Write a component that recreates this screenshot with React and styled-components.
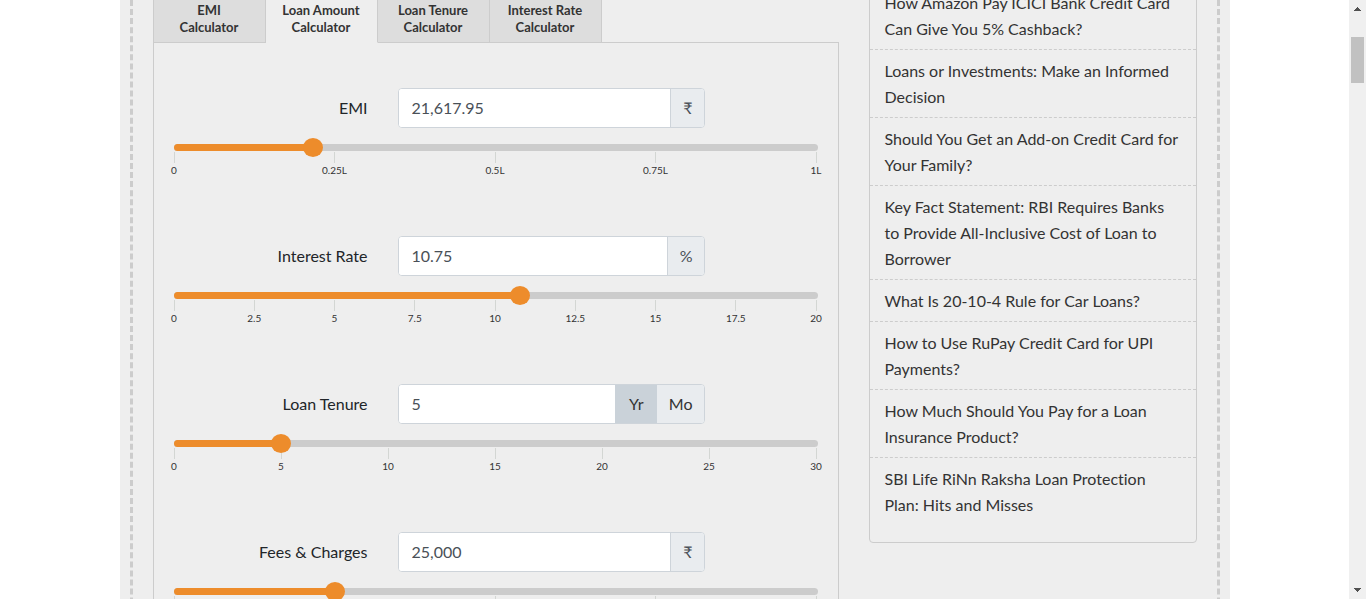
import React, { useState } from "react";
import styled, { createGlobalStyle } from "styled-components";

const GlobalStyle = createGlobalStyle`
  *, *::before, *::after { box-sizing: border-box; }
  body {
    margin: 0;
    background: #fff;
    color: #212529;
    font: 400 16px/26px Lato, "Noto Sans", sans-serif;
    font-variant-ligatures: none;
  }
  button, input { font: inherit; color: inherit; margin: 0; }
`;

const Shell = styled.div`
  display: flex;
  height: 100vh;
  overflow: hidden;
`;

const Viewport = styled.div`
  flex: 1;
  min-width: 0;
`;

const Container = styled.div`
  max-width: 1110px;
  margin: 0 auto;
  padding: 0 10px;
  background: #eee;
`;

const Frame = styled.main`
  display: grid;
  grid-template-columns: minmax(0, 1fr) 328px;
  gap: 30px;
  align-items: start;
  padding: 0 20px;
  border: dashed #ccc;
  border-width: 0 3px;
`;

const TabList = styled.div`
  display: flex;
  border-bottom: 1px solid #ccc;
`;

const Tab = styled.button`
  width: 112px;
  height: 43px;
  margin-bottom: -1px;
  padding: 2px 16px 6px;
  border: solid #ccc;
  border-width: 0 1px 1px 0;
  background: ${(p) => (p.$active ? "#eee" : "#ddd")};
  border-bottom-color: ${(p) => (p.$active ? "#eee" : "#ccc")};
  color: #333;
  font-size: 13px;
  font-weight: 700;
  line-height: 17px;
  cursor: pointer;

  &:first-child {
    width: 113px;
    padding: 2px 20px 6px;
    border-left-width: 1px;
  }
`;

const Panel = styled.form`
  display: flex;
  flex-direction: column;
  gap: 58px;
  padding: 45px 20px;
  border: solid #ccc;
  border-width: 0 1px;
`;

const Field = styled.div`
  display: flex;
  flex-direction: column;
  gap: 16px;
`;

const FieldRow = styled.div`
  display: grid;
  grid-template-columns: 194px minmax(0, 307px);
  gap: 30px;
  align-items: center;
`;

const Label = styled.label`
  text-align: right;
`;

const InputGroup = styled.div`
  display: flex;
  height: 40px;
  border: 1px solid #ced4da;
  border-radius: 4px;
  overflow: hidden;
  background: #fff;
`;

const TextInput = styled.input`
  flex: 1;
  min-width: 0;
  padding: 0 13px;
  border: 0;
  outline: 0;
  background: #fff;
  color: #495057;
`;

const Unit = styled.span`
  display: flex;
  align-items: center;
  padding: 0 11px 0 12px;
  border-left: 1px solid #ced4da;
  background: #e9ecef;
  color: #495057;
`;

const UnitButton = styled.button`
  min-width: 42px;
  padding: 0 11px 0 12px;
  border: 0;
  background: ${(p) => (p.$active ? "#cad2d9" : "#e9ecef")};
  color: #333;
  cursor: pointer;
`;

const Slider = styled.div`
  display: flex;
  flex-direction: column;
  gap: 1px;
`;

const Rail = styled.div`
  display: grid;
  grid-template-rows: 7px;
  align-items: center;
  border-radius: 4px;
  background: #ccc;
`;

const RailFill = styled.div`
  grid-area: 1 / 1;
  height: 7px;
  border-radius: 4px;
  background: #ed8c2b;
`;

const Range = styled.input`
  grid-area: 1 / 1;
  z-index: 1;
  appearance: none;
  width: calc(100% + 20px);
  height: 19px;
  margin: 0 -10px;
  background: transparent;
  cursor: pointer;

  &::-webkit-slider-thumb {
    appearance: none;
    width: 20px;
    height: 19px;
    border-radius: 50%;
    background: #ed8c2b;
  }
`;

const Scale = styled.div`
  display: flex;
  justify-content: space-between;
  padding-right: 1px;
`;

const Tick = styled.span`
  display: flex;
  flex-direction: column;
  align-items: center;
  width: 1px;
  color: #333;
  font-size: 10px;
  line-height: 15px;
  white-space: nowrap;

  &::before {
    content: "";
    width: 1px;
    height: 11px;
    background: #d3d6d3;
  }
`;

const Sidebar = styled.aside`
  margin-top: -19px;
  padding-bottom: 17px;
  border: 1px solid #ccc;
  border-radius: 4px;
`;

const LinkList = styled.ul`
  margin: 0;
  padding: 0;
  list-style: none;
`;

const LinkItem = styled.li`
  padding: 8px 14px 7px 15px;
  border-bottom: 1px dashed #ccc;

  &:last-child { border-bottom: 0; }
`;

const ArticleLink = styled.a`
  color: #333;
  text-decoration: none;
`;

const ScrollBar = styled.div`
  display: flex;
  flex-direction: column;
  flex: 0 0 17px;
  align-items: center;
  height: 100vh;
  background: #f0f0f0;
`;

const Thumb = styled.div`
  width: 13px;
  height: 46px;
  margin: 20px 0 auto;
  background: #c1c1c1;
`;

const Arrow = ({ down }) => (
  <svg width="17" height="17" viewBox="0 0 17 17" fill="#505050" shapeRendering="crispEdges">
    <path d={down ? "M5 6h7v1h-1v1h-1v1h-1v1h-1v-1h-1v-1h-1v-1h-1z" : "M8 7h1v1h1v1h1v1h1v1h-7v-1h1v-1h1v-1h1z"} />
  </svg>
);

const tabs = ["EMI Calculator", "Loan Amount Calculator", "Loan Tenure Calculator", "Interest Rate Calculator"];

const fields = [
  { id: "emi", label: "EMI", text: "21,617.95", unit: "₹", value: 21618, max: 100000, ticks: ["0", "0.25L", "0.5L", "0.75L", "1L"] },
  { id: "rate", label: "Interest Rate", text: "10.75", unit: "%", value: 10.75, max: 20, ticks: ["0", "2.5", "5", "7.5", "10", "12.5", "15", "17.5", "20"] },
  { id: "tenure", label: "Loan Tenure", text: "5", value: 5, max: 30, ticks: ["0", "5", "10", "15", "20", "25", "30"] },
  { id: "fees", label: "Fees & Charges", text: "25,000", unit: "₹", value: 25000, max: 100000, ticks: ["0", "25K", "50K", "75K", "1L"] },
];

const articles = [
  "How Amazon Pay ICICI Bank Credit Card Can Give You 5% Cashback?",
  "Loans or Investments: Make an Informed Decision",
  "Should You Get an Add-on Credit Card for Your Family?",
  "Key Fact Statement: RBI Requires Banks to Provide All-Inclusive Cost of Loan to Borrower",
  "What Is 20-10-4 Rule for Car Loans?",
  "How to Use RuPay Credit Card for UPI Payments?",
  "How Much Should You Pay for a Loan Insurance Product?",
  "SBI Life RiNn Raksha Loan Protection Plan: Hits and Misses",
];

function CalculatorField({ field }) {
  const [text, setText] = useState(field.text);
  const [value, setValue] = useState(field.value);
  const [period, setPeriod] = useState("Yr");

  const slide = (e) => {
    setValue(Number(e.target.value));
    setText(Number(e.target.value).toLocaleString("en-IN"));
  };

  return (
    <Field>
      <FieldRow>
        <Label htmlFor={field.id}>{field.label}</Label>
        <InputGroup>
          <TextInput id={field.id} value={text} onChange={(e) => setText(e.target.value)} />
          {field.unit ? (
            <Unit>{field.unit}</Unit>
          ) : (
            ["Yr", "Mo"].map((p) => (
              <UnitButton key={p} type="button" $active={p === period} aria-pressed={p === period} onClick={() => setPeriod(p)}>
                {p}
              </UnitButton>
            ))
          )}
        </InputGroup>
      </FieldRow>
      <Slider>
        <Rail>
          <RailFill style={{ width: `${(value / field.max) * 100}%` }} />
          <Range type="range" min="0" max={field.max} step="any" value={value} onChange={slide} aria-label={field.label} />
        </Rail>
        <Scale>
          {field.ticks.map((t) => (
            <Tick key={t}>{t}</Tick>
          ))}
        </Scale>
      </Slider>
    </Field>
  );
}

export default function App() {
  const [active, setActive] = useState(1);
  return (
    <>
      <GlobalStyle />
      <Shell>
        <Viewport>
          <Container>
            <Frame>
              <section>
                <TabList role="tablist">
                  {tabs.map((t, i) => (
                    <Tab key={t} type="button" role="tab" aria-selected={i === active} $active={i === active} onClick={() => setActive(i)}>
                      {t}
                    </Tab>
                  ))}
                </TabList>
                <Panel>
                  {fields.map((f) => (
                    <CalculatorField key={f.id} field={f} />
                  ))}
                </Panel>
              </section>
              <Sidebar>
                <LinkList>
                  {articles.map((a) => (
                    <LinkItem key={a}>
                      <ArticleLink href="#">{a}</ArticleLink>
                    </LinkItem>
                  ))}
                </LinkList>
              </Sidebar>
            </Frame>
          </Container>
        </Viewport>
        <ScrollBar aria-hidden="true">
          <Arrow />
          <Thumb />
          <Arrow down />
        </ScrollBar>
      </Shell>
    </>
  );
}
